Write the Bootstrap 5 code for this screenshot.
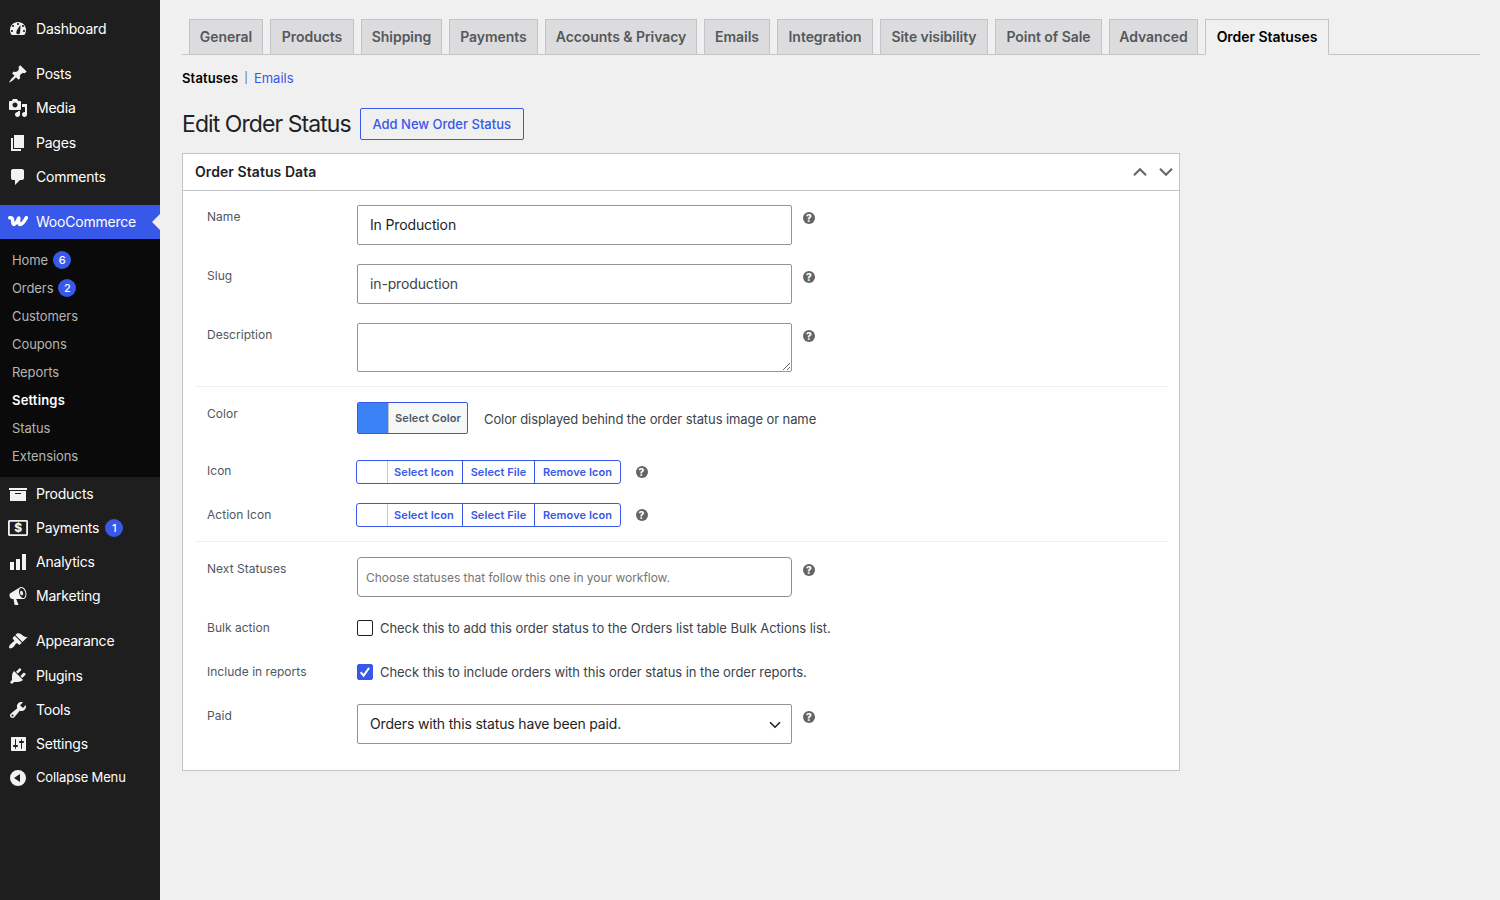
<!DOCTYPE html>
<html lang="en">
<head>
<meta charset="utf-8">
<title>Edit Order Status</title>
<link rel="stylesheet" href="https://cdn.jsdelivr.net/npm/bootstrap@5.3.0/dist/css/bootstrap.min.css">
<style>
:root{--accent:#3858e9;--line:#c3c4c7;--ink:#1d2327;--soft:#50575e}
body{background:#f0f0f0;font-family:Inter,"Liberation Sans",sans-serif;font-size:13px;line-height:1.4;color:#3c434a;height:900px;overflow:hidden}
a{text-decoration:none}
.side{width:160px;background:#1e1e1e;padding-top:12.15px}
.side .nav-link{height:34.2px;padding:0 0 0 8px;gap:8px;color:#fff;font-size:14px;letter-spacing:-.22px;line-height:1;white-space:nowrap}
.side svg{width:20px;height:20px;fill:#f3f1f1;flex:none}
.side .dial{margin-top:-2px}
.side .collapse-link{font-size:13px;letter-spacing:-.15px;margin-top:-.5px}
.sep{height:10.8px}
.side .nav-link.current{background:var(--accent);position:relative}
.side .current::after{content:"";position:absolute;right:0;top:9px;border:8px solid transparent;border-left:0;border-right-color:#f0f0f0}
.submenu{background:#0a0a0a;padding:7.2px 0 6px}
.submenu .nav-link{height:28.1px;padding-left:12px;gap:5px;font-size:13px;color:#b5b5b5;letter-spacing:-.08px}
.submenu .nav-link.on{color:#fff;font-weight:600;letter-spacing:.18px}
.count{width:18px;height:18px;border-radius:50%;background:var(--accent);color:#fff;font-size:11px;font-weight:500;letter-spacing:0}
.side > .nav-link .count{margin-left:-2px}
.page{padding:19px 20px 0 22px}
.tabs{height:36px;padding-left:7px;gap:7px;border-bottom:1px solid var(--line)}
.tabs a{height:36px;border:1px solid var(--line);background:#dcdcde;color:#55585b;font-size:14px;font-weight:600;letter-spacing:-.05px;white-space:nowrap;flex:none}
.tabs a.on{background:#f0f0f0;border-bottom-color:#f0f0f0;color:#000}
.crumbs{height:18px;margin-top:14px}
.crumbs a{color:var(--accent)}
.crumbs strong{font-weight:600;color:#000;letter-spacing:.14px}
.crumbs span{padding:2px 6px 0;font-size:11px;color:#646970}
.title{margin-top:21px;height:32px;gap:9px}
.title h1{font-size:23px;font-weight:400;color:var(--ink);margin:0;letter-spacing:-.93px;line-height:32px;white-space:nowrap}
.add{width:164px;height:32px;border:1px solid var(--accent);border-radius:2px;color:var(--accent);font-weight:500;white-space:nowrap}
.panel{width:998px;height:618px;margin-top:13px;background:#fff;border:1px solid var(--line)}
.panel-top{height:37px;padding:0 6px 0 12px;border-bottom:1px solid var(--line)}
.panel-top h2{font-size:14px;font-weight:600;color:var(--ink);margin:0;letter-spacing:.07px}
.panel-top svg{width:14px;height:10px;fill:none;stroke:#646970;stroke-width:2.2}
.fields{padding:14px 12px 0}
.line{padding-left:12px}
.line > label{width:150px;flex:none;line-height:24px;font-size:12px;color:var(--soft);letter-spacing:.03px}
.h59{height:59px}.h63{height:63px}.h58{height:58px}.h44{height:44px}.h43{height:43px}.h38{height:38px}
.h43 > label{margin-top:-1px}
.rule{border-top:1px solid #eee;height:16px}
.fields .form-control,.fields .form-select{width:435px;height:40px;border:1px solid #949494;border-radius:2px;font-size:14px;padding:0 12px 2px;color:#1e1e1e;flex:none;letter-spacing:-.14px}
.fields textarea.form-control{height:49px}
.fields .form-control.follow{border-color:#8c8f94;border-radius:4px;padding:0 8px;font-size:12px;letter-spacing:-.03px}
.follow::placeholder{color:#757575;opacity:1}
.fields .form-select{letter-spacing:-.17px}
.slug{color:#3c434a!important}
.fields .form-select{background-image:url("data:image/svg+xml,%3Csvg xmlns='http://www.w3.org/2000/svg' viewBox='0 0 12 8'%3E%3Cpath d='M1 1.2l5 5 5-5' fill='none' stroke='%231e1e1e' stroke-width='1.6'/%3E%3C/svg%3E");background-size:12px 8px;background-position:right 10px top 16px}
.help{width:12px;height:12px;border-radius:50%;background:#646464;color:#fff;font-size:10px;font-weight:800;line-height:12px;text-align:center;margin:6.5px 0 0 11px;flex:none}
.picker{width:111px;height:32px;border:1px solid var(--accent);border-radius:2px;background:#f6f7f7;font-size:11px;font-weight:600;color:var(--soft);overflow:hidden;white-space:nowrap;letter-spacing:.08px}
.picker .cap{line-height:30px}
.swatch{width:31px;background:#3b82f6;border-right:1px solid var(--line)}
.hint{margin-left:16px;line-height:34px;white-space:nowrap;letter-spacing:-.09px}
.icons{width:265px;height:24px;margin-left:-1px;border:1px solid var(--accent);border-radius:3px;font-size:11px;font-weight:600;color:var(--accent);line-height:22px;white-space:nowrap;letter-spacing:.08px;text-align:center}
.icons .blank{width:31px;border-right:1px solid #ccc}
.icons .p1{width:75px;padding-right:2px;border-right:1px solid var(--accent)}
.icons .p2{width:72px;border-right:1px solid var(--accent)}
.icons + .help{margin-left:14.5px;margin-top:5.5px}
.fields .form-check-input{width:16px;height:16px;margin:4px 7px 0 0;border:1px solid #1e1e1e;border-radius:2px;flex:none}
.fields .form-check-input:checked{background-color:var(--accent);border-color:var(--accent);background-image:url("data:image/svg+xml,%3Csvg xmlns='http://www.w3.org/2000/svg' viewBox='0 0 16 16'%3E%3Cpath d='M3 8.300l3.400 3.900 6.300-9' fill='none' stroke='white' stroke-width='2.300'/%3E%3C/svg%3E")}
.say{line-height:24px;white-space:nowrap;letter-spacing:-.05px}
</style>
</head>
<body class="d-flex">
<nav class="side nav flex-column flex-nowrap flex-shrink-0">
  <a class="nav-link d-flex align-items-center" href="#"><svg class="dial" viewBox="0 0 20 20"><path fill-rule="evenodd" d="M3.76 17h12.48c1.14-1.39 1.76-3.17 1.76-5 0-4.42-3.58-8-8-8s-8 3.58-8 8c0 1.83.62 3.61 1.76 5zM9 6c0-.55.45-1 1-1s1 .45 1 1c0 .56-.45 1-1 1s-1-.44-1-1zM4 8c0-.55.45-1 1-1s1 .45 1 1c0 .56-.45 1-1 1s-1-.44-1-1zm4.520 5.400c.3-1.500 4-6.300 4-6.300s-.1 6.400-.5 7.800c-.5 1.200-1.700 1.700-2.700 1.200-1-.6-1.300-1.700-.8-2.700zM3 13c0-.55.45-1 1-1s1 .45 1 1c0 .56-.45 1-1 1s-1-.44-1-1zM14 8c0-.55.45-1 1-1s1 .45 1 1c0 .56-.45 1-1 1s-1-.44-1-1zm1 5c0-.55.45-1 1-1s1 .45 1 1c0 .56-.45 1-1 1s-1-.44-1-1z"/></svg>Dashboard</a>
  <div class="sep"></div>
  <a class="nav-link d-flex align-items-center" href="#"><svg viewBox="0 0 20 20"><path d="M10.44 3.02l1.82-1.82 6.36 6.35-1.83 1.82c-1.05-.68-2.48-.57-3.41.36l-.75.75c-.92.93-1.04 2.35-.35 3.41l-1.83 1.82-2.41-2.41-2.8 2.79c-.42.42-3.38 2.71-3.8 2.29s1.86-3.39 2.28-3.81l2.79-2.79L4.1 9.36l1.83-1.82c1.05.69 2.48.57 3.4-.36l.75-.75c.93-.92 1.05-2.35.36-3.41z"/></svg>Posts</a>
  <a class="nav-link d-flex align-items-center" href="#"><svg viewBox="0 0 20 20"><path fill-rule="evenodd" d="M13 11V4c0-.55-.45-1-1-1h-1.67L9 1H5L3.67 3H2c-.55 0-1 .45-1 1v7c0 .55.45 1 1 1h10c.55 0 1-.45 1-1zM7 4.5c1.38 0 2.5 1.12 2.5 2.5S8.38 9.5 7 9.5 4.5 8.38 4.5 7 5.62 4.5 7 4.5zM14 6h5v10.5c0 1.38-1.12 2.5-2.5 2.5S14 17.88 14 16.5s1.12-2.5 2.5-2.5c.17 0 .34.02.5.05V9h-3V6zm-4 8.05V13h2v3.5c0 1.38-1.12 2.5-2.5 2.5S7 17.88 7 16.5 8.12 14 9.5 14c.17 0 .34.02.5.05z"/></svg>Media</a>
  <a class="nav-link d-flex align-items-center" href="#"><svg viewBox="0 0 20 20"><path d="M6 15V2h10v13H6zm-1 1h8v2H3V5h2v11z"/></svg>Pages</a>
  <a class="nav-link d-flex align-items-center" href="#"><svg viewBox="0 0 20 20"><path d="M5 2h9c1.1 0 2 .9 2 2v7c0 1.1-.9 2-2 2h-2l-5 5v-5H5c-1.1 0-2-.9-2-2V4c0-1.1.9-2 2-2z"/></svg>Comments</a>
  <div class="sep"></div>
  <a class="nav-link current d-flex align-items-center" href="#"><svg viewBox="0 0 20 20"><path d="M1.800 5.800C4 5.500 4.700 6.500 4.700 9c0 2 .3 3.400 1.300 3.400 1.500 0 3.300-3.200 4.800-6.300-.3 3.600-.2 6.300 1.400 6.300 1.900 0 4.300-3.200 6.200-6.700" fill="none" stroke="#fff" stroke-width="3.500" stroke-linecap="round" stroke-linejoin="round"/></svg>WooCommerce</a>
  <div class="submenu">
    <a class="nav-link d-flex align-items-center" href="#">Home<span class="count d-flex align-items-center justify-content-center">6</span></a>
    <a class="nav-link d-flex align-items-center" href="#">Orders<span class="count d-flex align-items-center justify-content-center">2</span></a>
    <a class="nav-link d-flex align-items-center" href="#">Customers</a>
    <a class="nav-link d-flex align-items-center" href="#">Coupons</a>
    <a class="nav-link d-flex align-items-center" href="#">Reports</a>
    <a class="nav-link on d-flex align-items-center" href="#">Settings</a>
    <a class="nav-link d-flex align-items-center" href="#">Status</a>
    <a class="nav-link d-flex align-items-center" href="#">Extensions</a>
  </div>
  <a class="nav-link d-flex align-items-center" href="#"><svg viewBox="0 0 20 20"><path d="M19 4v2H1V4h18zM2 7h16v10H2V7zm11 3V9H7v1h6z"/></svg>Products</a>
  <a class="nav-link d-flex align-items-center" href="#"><svg viewBox="0 0 20 20"><rect x=".9" y="2.900" width="18.200" height="14.200" rx=".5" fill="none" stroke="#f3f1f1" stroke-width="1.800"/><text x="10" y="14.300" font-size="12" font-weight="800" text-anchor="middle">$</text></svg>Payments<span class="count d-flex align-items-center justify-content-center">1</span></a>
  <a class="nav-link d-flex align-items-center" href="#"><svg viewBox="0 0 20 20"><path d="M18 18V2h-4v16h4zm-6 0V7H8v11h4zm-6 0v-8H2v8h4z"/></svg>Analytics</a>
  <a class="nav-link d-flex align-items-center" href="#"><svg viewBox="0 0 20 20"><path fill-rule="evenodd" d="M18.150 5.940c.46 1.620.38 3.220-.02 4.480-.42 1.280-1.260 2.180-2.300 2.480-.16.06-.26.06-.4.06-.06.02-.12.02-.18.02-.06.02-.14.02-.22.02h-6.800l2.220 5.500c.02.14-.06.26-.14.34-.08.1-.24.16-.34.16H6.950c-.1 0-.26-.06-.34-.16-.08-.08-.16-.2-.14-.34l-1-5.500H4.250l-.02-.02c-.5.06-1.080-.18-1.540-.62s-.88-1.080-1.060-1.880c-.24-.8-.2-1.560-.02-2.200.18-.62.58-1.080 1.060-1.300l.02-.02 9-5.400c.1-.06.18-.1.24-.16.06-.04.14-.08.24-.12.16-.08.28-.12.5-.18 1.040-.3 2.240.1 3.220.98s1.840 2.240 2.260 3.860zm-2.580 5.980h-.02c.4-.1.74-.34 1.040-.7.58-.7.86-1.760.86-3.040 0-.64-.1-1.300-.28-1.980-.34-1.360-1.020-2.500-1.780-3.240s-1.680-1.100-2.460-.88c-.82.22-1.400.96-1.700 2-.32 1.040-.28 2.360.06 3.720.38 1.360 1 2.500 1.800 3.240.78.74 1.620 1.100 2.480.88zm-2.540-7.080c.22-.04.42-.02.62.04.38.16.76.48 1.020 1s.42 1.200.42 1.780c0 .3-.04.56-.12.8-.18.48-.44.84-.86.94-.34.1-.8-.06-1.140-.4s-.64-.86-.78-1.500c-.18-.62-.12-1.240.02-1.720s.48-.84.820-.94z"/></svg>Marketing</a>
  <div class="sep"></div>
  <a class="nav-link d-flex align-items-center" href="#"><svg viewBox="0 0 20 20"><path d="M14.480 11.060L7.410 3.990l1.500-1.500c.5-.56 2.300-.47 3.510.32 1.210.8 1.430 1.280 2.910 2.100 1.180.64 2.450 1.260 4.450.85zm-.71.71L6.700 4.700 4.930 6.470c-.39.39-.39 1.020 0 1.410l1.060 1.060c.39.39.39 1.030 0 1.420-.6.6-1.430 1.110-2.210 1.690-.35.26-.7.53-1.010.84C1.430 14.230.4 16.080 1.400 17.070c.99 1 2.840-.03 4.180-1.360.31-.31.58-.66.85-1.020.57-.78 1.080-1.610 1.690-2.210.39-.39 1.020-.39 1.410 0l1.060 1.060c.39.39 1.020.39 1.410 0z"/></svg>Appearance</a>
  <a class="nav-link d-flex align-items-center" href="#"><svg viewBox="0 0 20 20"><path d="M13.110 4.360L9.870 7.600 8 5.730l3.240-3.240c.35-.34 1.050-.2 1.560.32.52.51.66 1.210.31 1.550zm-8 1.770l.91-1.120 9.010 9.010-1.190.84c-.71.71-2.630 1.160-3.820 1.160H6.140L4.900 17.260c-.59.59-1.540.59-2.120 0-.59-.58-.59-1.530 0-2.120l1.240-1.240v-3.880c0-1.130.4-3.190 1.090-3.890zm7.260 3.970l3.240-3.240c.34-.35 1.040-.21 1.550.31.52.51.66 1.210.31 1.550l-3.240 3.250z"/></svg>Plugins</a>
  <a class="nav-link d-flex align-items-center" href="#"><svg viewBox="0 0 20 20"><path fill-rule="evenodd" d="M16.680 9.770c-1.340 1.340-3.300 1.670-4.950.99l-5.410 6.520c-.99.99-2.590.99-3.580 0s-.99-2.590 0-3.570l6.520-5.420c-.68-1.650-.35-3.610.99-4.950 1.280-1.280 3.120-1.620 4.720-1.060l-2.890 2.890 2.820 2.820 2.860-2.870c.53 1.580.18 3.390-1.080 4.650zM3.810 16.210c.4.39 1.040.39 1.430 0 .4-.4.4-1.040 0-1.430-.39-.4-1.030-.4-1.430 0-.39.39-.39 1.030 0 1.430z"/></svg>Tools</a>
  <a class="nav-link d-flex align-items-center" href="#"><svg viewBox="0 0 20 20"><path fill-rule="evenodd" d="M18 16V4c0-.55-.45-1-1-1H4c-.55 0-1 .45-1 1v12c0 .55.45 1 1 1h13c.55 0 1-.45 1-1zM8 11h1c.55 0 1 .45 1 1s-.45 1-1 1H8v1.500c0 .28-.22.5-.5.5s-.5-.22-.5-.5V13H6c-.55 0-1-.45-1-1s.45-1 1-1h1V5.500c0-.28.22-.5.5-.5s.5.22.5.5V11zm5-2h-1c-.55 0-1-.45-1-1s.45-1 1-1h1V5.500c0-.28.22-.5.5-.5s.5.22.5.5V7h1c.55 0 1 .45 1 1s-.45 1-1 1h-1v5.500c0 .28-.22.5-.5.5s-.5-.22-.5-.5V9z"/></svg>Settings</a>
  <a class="nav-link d-flex align-items-center collapse-link" href="#"><svg viewBox="0 0 20 20"><path fill-rule="evenodd" d="M10 2a8 8 0 100 16 8 8 0 000-16zm2 4v8l-6-4z"/></svg>Collapse Menu</a>
</nav>
<main class="page flex-grow-1">
  <nav class="tabs d-flex">
    <a href="#" class="d-flex align-items-center justify-content-center" style="width:74px">General</a>
    <a href="#" class="d-flex align-items-center justify-content-center" style="width:84px">Products</a>
    <a href="#" class="d-flex align-items-center justify-content-center" style="width:81px">Shipping</a>
    <a href="#" class="d-flex align-items-center justify-content-center" style="width:89px">Payments</a>
    <a href="#" class="d-flex align-items-center justify-content-center" style="width:152px">Accounts &amp; Privacy</a>
    <a href="#" class="d-flex align-items-center justify-content-center" style="width:66px">Emails</a>
    <a href="#" class="d-flex align-items-center justify-content-center" style="width:96px">Integration</a>
    <a href="#" class="d-flex align-items-center justify-content-center" style="width:108px">Site visibility</a>
    <a href="#" class="d-flex align-items-center justify-content-center" style="width:107px">Point of Sale</a>
    <a href="#" class="d-flex align-items-center justify-content-center" style="width:89px">Advanced</a>
    <a href="#" class="on d-flex align-items-center justify-content-center" style="width:124px">Order Statuses</a>
  </nav>
  <div class="crumbs d-flex align-items-center"><strong>Statuses</strong><span>|</span><a href="#">Emails</a></div>
  <header class="title d-flex align-items-center"><h1>Edit Order Status</h1><a href="#" class="add d-flex align-items-center justify-content-center">Add New Order Status</a></header>
  <section class="panel">
    <div class="panel-top d-flex align-items-center justify-content-between">
      <h2>Order Status Data</h2>
      <div class="d-flex" style="gap:12px"><svg viewBox="0 0 14 10"><path d="M1 8.300L7 2.300l6 6"/></svg><svg viewBox="0 0 14 10"><path d="M1 1.700l6 6 6-6"/></svg></div>
    </div>
    <form class="fields">
      <div class="line d-flex align-items-start h59"><label>Name</label><input class="form-control" value="In Production"><span class="help">?</span></div>
      <div class="line d-flex align-items-start h59"><label>Slug</label><input class="form-control slug" value="in-production"><span class="help">?</span></div>
      <div class="line d-flex align-items-start h63"><label>Description</label><textarea class="form-control"></textarea><span class="help">?</span></div>
      <div class="rule"></div>
      <div class="line d-flex align-items-start h58"><label>Color</label><div class="picker d-flex"><span class="swatch"></span><span class="cap flex-grow-1 text-center">Select Color</span></div><span class="hint">Color displayed behind the order status image or name</span></div>
      <div class="line d-flex align-items-start h43"><label>Icon</label><div class="icons d-flex"><span class="blank"></span><span class="p1">Select Icon</span><span class="p2">Select File</span><span class="flex-grow-1">Remove Icon</span></div><span class="help">?</span></div>
      <div class="line d-flex align-items-start h38"><label>Action Icon</label><div class="icons d-flex"><span class="blank"></span><span class="p1">Select Icon</span><span class="p2">Select File</span><span class="flex-grow-1">Remove Icon</span></div><span class="help">?</span></div>
      <div class="rule"></div>
      <div class="line d-flex align-items-start h59"><label>Next Statuses</label><input class="form-control follow" placeholder="Choose statuses that follow this one in your workflow."><span class="help">?</span></div>
      <div class="line d-flex align-items-start h44"><label>Bulk action</label><input type="checkbox" class="form-check-input"><span class="say">Check this to add this order status to the Orders list table Bulk Actions list.</span></div>
      <div class="line d-flex align-items-start h44"><label>Include in reports</label><input type="checkbox" class="form-check-input" checked><span class="say">Check this to include orders with this order status in the order reports.</span></div>
      <div class="line d-flex align-items-start"><label>Paid</label><select class="form-select"><option>Orders with this status have been paid.</option></select><span class="help">?</span></div>
    </form>
  </section>
</main>
<script src="https://cdn.jsdelivr.net/npm/bootstrap@5.3.0/dist/js/bootstrap.bundle.min.js"></script>
</body>
</html>
